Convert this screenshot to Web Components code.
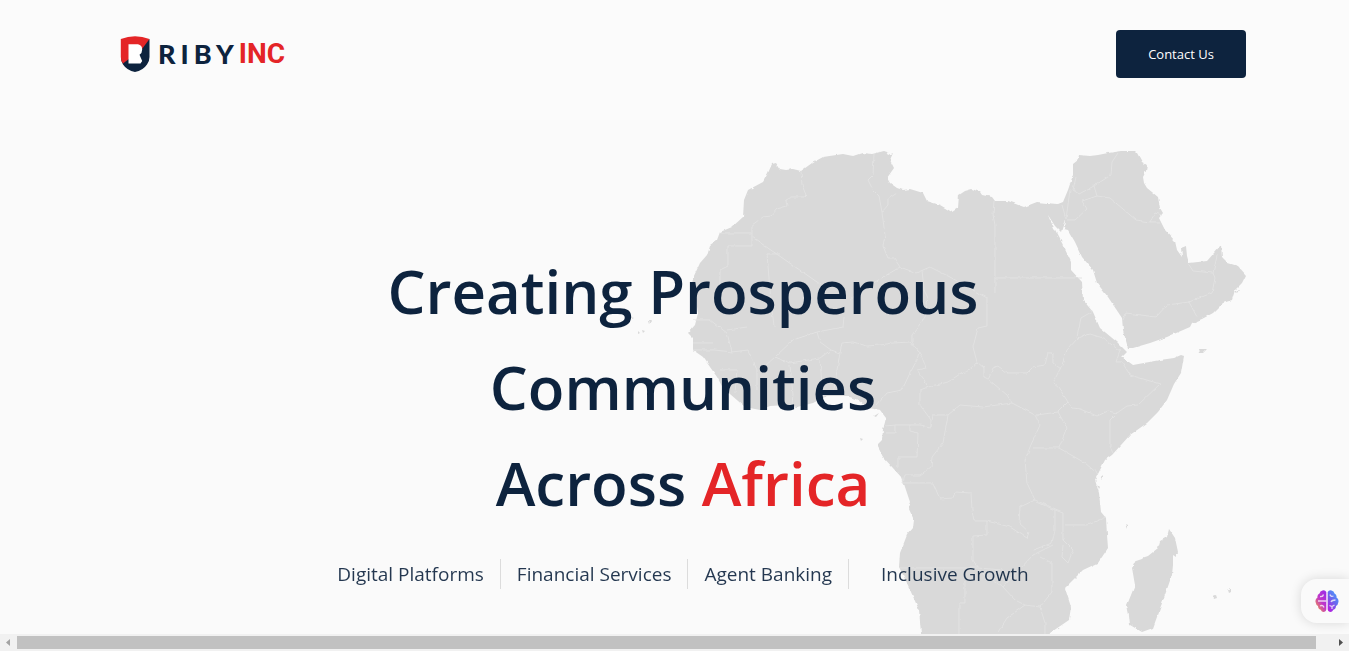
<!DOCTYPE html>
<html lang="en">
<head>
<meta charset="utf-8">
<title>Riby Inc</title>
<style>
  html, body { margin: 0; height: 100%; }
  body {
    --navy: #0d233e;
    --red: #e42527;
    --land: #d9d9d9;
    --page: #fafafa;
    font-family: "Open Sans", "Noto Sans", sans-serif;
    color: var(--navy);
    background: var(--page);
  }
</style>
</head>
<body>
<riby-page></riby-page>

<template id="page-tpl">
  <style>
    :host { display: flex; flex-direction: column; min-height: 100vh; }
    site-hero { flex: 1; }
    side-widget { position: fixed; right: 0; bottom: 28px; }
    scroll-strip { position: sticky; bottom: 0; }
  </style>
  <site-header></site-header>
  <site-hero>
    <span slot="line1">Creating Prosperous</span>
    <span slot="line2">Communities</span>
    <span slot="line3">Across</span>
    <span slot="accent">Africa</span>
    <feature-item slot="features">Digital Platforms</feature-item>
    <feature-item slot="features">Financial Services</feature-item>
    <feature-item slot="features">Agent Banking</feature-item>
    <feature-item slot="features" last>Inclusive Growth</feature-item>
  </site-hero>
  <side-widget></side-widget>
  <scroll-strip></scroll-strip>
</template>

<template id="header-tpl">
  <style>
    :host { display: block; background: #fbfbfb; }
    header { display: flex; justify-content: space-between; align-items: center; padding: 30px 103px 42px 120px; }
  </style>
  <header>
    <brand-logo></brand-logo>
    <action-button>Contact Us</action-button>
  </header>
</template>

<template id="logo-tpl">
  <style>
    :host { display: block; }
    a { display: flex; align-items: center; color: var(--navy); text-decoration: none; line-height: 36px; }
    svg { display: block; width: 30px; height: 36px; margin-right: 8px; }
    .riby { font: 900 27px/36px Lato, sans-serif; letter-spacing: 5px; }
    .inc { font: 700 28px/36px Roboto, sans-serif; color: var(--red); }
  </style>
  <a href="#" aria-label="RIBY INC">
    <svg viewBox="0 0 30 36" aria-hidden="true">
      <path fill="#0d233e" d="M1 22L29.500 3V21Q29.500 25 27 28.500 23 34.500 15 36 7 34.500 3 28.500 1 25 1 22Z"/>
      <path fill="#e42527" d="M.8 3Q15-2.600 29.500 3L22 13 3 27.500Q.8 25 .8 21Z"/>
      <path fill="#fff" d="M8.500 8.300h9.500q4.200.8 4.200 5.200 0 3.500-2.700 5.300l2.700 6.200-1.700 2.500H8.500z"/>
    </svg>
    <span class="riby">RIBY</span><span class="inc">INC</span>
  </a>
</template>

<template id="button-tpl">
  <style>
    :host { display: block; }
    button {
      width: 130px; height: 48px; padding: 0; border: 0; border-radius: 4px; cursor: pointer;
      font: 400 13px/20px "Open Sans", sans-serif; color: #fff; background: var(--navy);
    }
  </style>
  <button type="button"><slot></slot></button>
</template>

<template id="hero-tpl">
  <style>
    :host { display: block; position: relative; overflow: hidden; background: var(--page); }
    africa-map { position: absolute; top: 20px; right: 89px; }
    .content { position: relative; padding: 123px 103px 0 120px; text-align: center; }
    h1 { margin: 0; font-size: 60px; font-weight: 600; line-height: 96px; }
    h1 .accent { color: var(--red); }
    .features { display: flex; justify-content: center; margin: 28px 0 0; }
  </style>
  <africa-map></africa-map>
  <div class="content">
    <h1><slot name="line1"></slot><br><slot name="line2"></slot><br><slot name="line3"></slot> <span class="accent"><slot name="accent"></slot></span></h1>
    <div class="features"><slot name="features"></slot></div>
  </div>
</template>

<template id="feature-tpl">
  <style>
    :host { display: block; padding: 0 16px; border-right: 1px solid #d9d9d9; font-size: 19px; font-weight: 400; line-height: 30px; opacity: .9; }
    :host([last]) { border-right: 0; padding-left: 32px; }
  </style>
  <slot></slot>
</template>

<template id="map-tpl">
  <style>
    :host { display: block; width: 640px; height: 500px; }
    svg { display: block; width: 100%; height: 100%; }
  </style>
  <svg viewBox="620 140 640 500" aria-hidden="true">
    <defs>
      <filter id="coast" x="0" y="0" width="100%" height="100%" color-interpolation-filters="sRGB">
        <feTurbulence type="fractalNoise" baseFrequency=".16" numOctaves="2" seed="4"/>
        <feDisplacementMap in="SourceGraphic" scale="3" xChannelSelector="R" yChannelSelector="G"/>
      </filter>
    </defs>
    <g filter="url(#coast)">
      <g fill="#d9d9d9">
        <path d="M772 164L776 163 780 169 786 170 793 169 801 171 812 163 823 157 843 154 853 156 862 153 872 154 884 151 887 152 889 155 893 153 890 160 894 168 887 178 890 183 897 188 903 190 910 189 923 193 927 201 940 205 952 212 958 208 959 195 965 191 972 189 980 192 982 195 992 197 995 201 1007 201 1024 207 1037 202 1047 203 1058 204 1063 202 1068 190 1073 175 1073 164 1078 160 1079 155 1090 156 1098 155 1108 153 1122 151 1135 151 1137 153 1142 162 1147 165 1146 171 1143 177 1144 183 1147 188 1158 197 1160 208 1163 213 1159 218 1165 230 1175 241 1177 250 1182 257 1181 248 1186 246 1187 256 1189 263 1207 261 1214 253 1221 245 1222 257 1228 263 1238 266 1246 275 1242 283 1235 290 1232 300 1223 303 1213 313 1202 319 1192 323 1190 327 1167 337 1150 343 1133 348 1128 348 1123 330 1122 318 1108 297 1097 283 1093 270 1082 257 1075 242 1068 230 1064 229 1065 219 1061 232 1055 226 1048 215 1050 220 1062 243 1071 262 1071 270 1082 282 1083 300 1093 312 1100 328 1117 342 1127 352 1122 357 1133 365 1160 360 1174 358 1181 355 1184 356 1181 373 1174 384 1167 400 1158 412 1147 423 1130 435 1112 455 1105 460 1095 480 1099 493 1101 512 1106 518 1107 535 1108 548 1098 563 1083 570 1065 588 1071 607 1069 620 1050 633 1048 642 921 642 921 633 919 610 907 583 899 567 900 553 907 535 913 528 914 520 908 507 910 502 902 478 883 457 877 445 882 440 883 430 886 418 880 410 867 408 858 400 847 396 827 396 813 403 797 407 787 405 770 406 760 410 745 407 723 388 717 377 703 357 693 350 693 338 688 333 695 325 698 313 696 300 692 285 693 278 700 263 707 255 710 245 717 240 720 232 732 227 743 217 744 200 748 190 763 182 768 173Z"/>
        <path d="M1169 529L1175 538 1178 552 1176 557 1173 555 1173 565 1172 575 1166 592 1153 628 1142 632 1130 625 1129 615 1127 605 1135 585 1132 568 1136 560 1148 556 1158 548 1160 541 1167 537Z"/>
        <path d="M1199 349h8l-3 3h-4zM1213 596l3-1 1 3-3 1zM1228 590l3-2v4l-2 1zM1126 524l2 1v4zM1139 533l2 2zM1100 476l2-2v5zM1097 484l3 3-1 2zM874 416l5-3-3 4zM860 438l3 1-2 2zM631 316l3 1-2 1zM648 321h3l-2 3zM638 331l2 2-2 1zM642 330l3 1-2 2zM646 329l2 1zM1235 291l4-1-2 3z"/>
      </g>
      <path fill="none" stroke="#e2e2e2" stroke-width="1" d="
        M801 171L802 185 806 195 804 197 792 197 786 200 787 206 777 209 771 216 763 217 752 225V246H728V266L720 270V285M720 233H752M752 237L820 284M780 254H767L770 290 774 327
        M874 154L873 175 868 180 873 190 879 196 882 212 885 235 883 246 888 258 894 258 900 267 916 273 930 267 950 277 987 298M882 212L888 205 888 199 897 193
        M994 201L993 215 995 225V293M995 278H1082M900 267L870 285 850 300M922 270L924 290 928 298 925 317 912 335 912 342
        M840 353L842 343 853 342 867 346 880 345 893 343 910 342 919 352 917 360 910 373 902 390 887 393 877 405
        M912 342L922 357 926 368 917 370 923 378 928 387 920 390 920 405 931 420 931 427 920 425 895 425 886 426M928 387L948 382 960 374 970 370 977 362
        M987 298V326L978 328 973 347 977 362 984 368 984 377 988 379 1007 395 1012 403 983 407 960 405 948 415 933 415 931 427
        M948 415L943 443 932 457 931 467 920 475 905 475 903 483H933L940 499 953 498 955 492 971 493 972 510 974 521H987V535L973 536V560L978 568
        M987 521L1010 527 1027 538 1029 532 1019 523 1020 507 1035 500 1060 511M1035 500L1027 483 1025 460 1030 447 1040 425 1035 415 1012 403
        M988 379L993 368 998 366 1007 373 1027 373 1033 367 1045 365 1048 353 1053 353 1053 363 1061 369M1035 415L1037 415 1058 412
        M900 568H948L978 568 1003 570M965 582V603H959V640M978 570L1003 587 1015 600 1025 605 1007 618 998 632M1025 605L1040 607 1052 592V563L1040 557M1040 607L1045 623V640M1003 587L1033 555 1053 545
        M895 425V433H886M910 425V431L918 433 917 457 898 457V467
        M1078 338L1067 350 1062 365 1053 383 1059 388 1068 402 1073 408 1080 409 1097 416 1108 411 1117 413 1127 406 1138 405 1160 384 1130 375 1122 362 1116 362 1120 351 1103 338 1090 334 1078 338
        M1117 413L1110 420V447L1113 453M1068 402L1058 412 1067 428 1059 448 1085 463 1098 474M1059 448H1033
        M1037 502L1055 510V530L1052 543 1033 550M1055 510L1063 513V540L1073 550 1068 563 1062 557 1063 545M1065 525H1087L1106 517
        M1093 311L1081 318 1077 337M693 320L710 320 727 333 732 352 748 350 757 370 757 390M727 330L747 327M693 343H713M693 350L715 350 732 352
        M775 357L793 340 817 332 843 327 844 317M817 332L820 342 831 350 820 358 790 363 775 357 765 366M790 365L793 395 792 404M820 360L823 398M831 350L840 353 837 370 833 395M720 370L737 370 735 393
        M1118 153L1112 162 1111 175 1094 186 1079 194 1073 190 1076 177M1094 186L1097 196 1082 201 1087 209 1075 220 1067 220M1097 196L1110 198 1136 220 1150 222 1160 222M1150 222L1155 213 1162 215M1066 219L1070 190M1066 219L1062 205
        M1188 263L1193 271 1213 273 1217 255M1213 273L1215 278 1212 293 1189 302 1197 317M1189 302L1167 305 1156 317 1126 313 1123 320"/>
    </g>
  </svg>
</template>

<template id="widget-tpl">
  <style>
    :host { display: block; }
    button {
      display: flex; align-items: center; width: 48px; height: 44px; padding: 0 0 0 14px; border: 0;
      border-radius: 16px 0 0 16px; background: var(--page); box-shadow: 0 0 12px rgba(0, 0, 0, .14); cursor: pointer;
    }
    svg { width: 24px; height: 24px; }
  </style>
  <button type="button" aria-label="Assistant">
    <svg viewBox="0 0 24 24" aria-hidden="true">
      <defs>
        <linearGradient id="left" x1=".9" y1="0" x2=".1" y2="1"><stop offset="0" stop-color="#9b2ce8"/><stop offset=".5" stop-color="#c238c8"/><stop offset="1" stop-color="#f4a03a"/></linearGradient>
        <linearGradient id="right" x1=".9" y1="0" x2=".2" y2="1"><stop offset="0" stop-color="#3fa9ff"/><stop offset=".5" stop-color="#6a67ee"/><stop offset="1" stop-color="#b51fe0"/></linearGradient>
      </defs>
      <path fill="url(#left)" d="M11.300 3Q10 .8 7.500 1.500 5 2 4.500 4.500 2 5.500 2.500 8.500-.3 10.500.7 13.500 1 16 3 17 3 20 5.700 20.700 7 23.500 9.500 22.800 11 22.300 11.300 20.500Z"/>
      <path fill="url(#right)" d="M12.700 3Q14 .8 16.500 1.500 19 2 19.500 4.500 22 5.500 21.500 8.500 24.300 10.500 23.300 13.500 23 16 21 17 21 20 18.300 20.700 17 23.500 14.500 22.800 13 22.300 12.700 20.500Z"/>
      <path fill="none" stroke="#fafafa" stroke-opacity=".8" stroke-width="1.300" d="M5 7.500Q8 8 8.500 5.500M3 12H11.300M5 17Q8 15.500 9 18.500M15 5.500Q15.500 8 18.500 7M20.500 11Q17 11 16 13M14.500 16.500L17 17.500 19.500 16M17 17.500V20"/>
    </svg>
  </button>
</template>

<template id="strip-tpl">
  <style>
    :host { display: block; }
    .track { display: flex; align-items: center; height: 17px; background: #f1f1f1; }
    svg { width: 17px; height: 17px; flex: none; }
    .thumb { flex: 1; height: 13px; margin-right: 16px; background: #c1c1c1; }
  </style>
  <div class="track" aria-hidden="true">
    <svg viewBox="0 0 17 17"><path fill="#a3a3a3" d="M10 5v7L6 8.500z"/></svg>
    <div class="thumb"></div>
    <svg viewBox="0 0 17 17"><path fill="#505050" d="M7 5v7l4-3.500z"/></svg>
  </div>
</template>

<script>
  const fromTemplate = id => class extends HTMLElement {
    constructor() {
      super();
      this.attachShadow({ mode: 'open' }).append(document.getElementById(id).content.cloneNode(true));
    }
  };
  customElements.define('brand-logo', fromTemplate('logo-tpl'));
  customElements.define('action-button', fromTemplate('button-tpl'));
  customElements.define('site-header', fromTemplate('header-tpl'));
  customElements.define('africa-map', fromTemplate('map-tpl'));
  customElements.define('feature-item', fromTemplate('feature-tpl'));
  customElements.define('site-hero', fromTemplate('hero-tpl'));
  customElements.define('side-widget', fromTemplate('widget-tpl'));
  customElements.define('scroll-strip', fromTemplate('strip-tpl'));
  customElements.define('riby-page', fromTemplate('page-tpl'));
</script>
</body>
</html>
